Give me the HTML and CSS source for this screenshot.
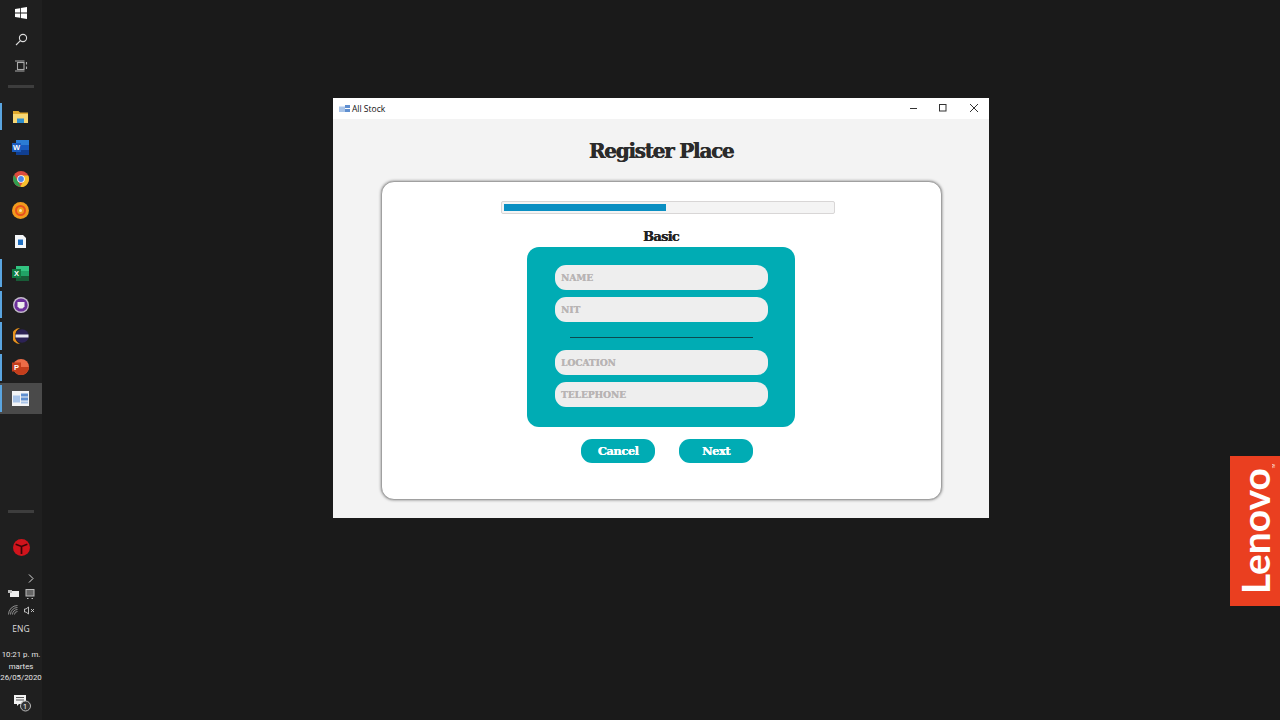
FILE: index.html
```html
<!DOCTYPE html>
<html lang="es">
<head>
    <meta charset="UTF-8">
    <meta name="viewport" content="width=device-width, initial-scale=1.0">
    <title>All Stock</title>
    <link rel="stylesheet" href="styles.css">
</head>
<body>
    <aside class="taskbar">
        <div class="taskbar-top">
            <div class="sys-btn">
                <svg width="12" height="12" viewBox="0 0 12 12"><path fill="#fff" d="M0 2l5-.8v4.400H0zM5.800 1.100L12 0v5.600H5.800zM0 6.400h5v4.400L0 10zM5.800 6.400H12V12l-6.200-1z"/></svg>
            </div>
            <div class="sys-btn">
                <svg width="13" height="13" viewBox="0 0 13 13" fill="none" stroke="#ddd" stroke-width="1.100"><circle cx="8" cy="5" r="3.600"/><path d="M5.400 7.600L1 12"/></svg>
            </div>
            <div class="sys-btn">
                <svg width="13" height="12" viewBox="0 0 13 12" fill="none" stroke="#aaa" stroke-width="1.100"><rect x="2.500" y="2.500" width="6.500" height="7"/><path d="M0 1h9.500M0 11h9.500M11.500 2v2.500M11.500 6.500V9"/></svg>
            </div>
            <div class="divider"></div>

            <div class="apps">
                <div class="app pinned">
                    <svg width="15" height="13" viewBox="0 0 15 13"><path fill="#e0a92e" d="M0 1h5.500l1.500 1.500h8V13H0z"/><path fill="#f7d774" d="M0 4h15v9H0z"/><path fill="#2f8fd0" d="M4 8.500h7V13H4z"/></svg>
                </div>
                <div class="app">
                    <svg width="17" height="15" viewBox="0 0 17 15"><path fill="#2b7cd3" d="M4 0h13v5H4z"/><path fill="#185abd" d="M4 5h13v5H4z"/><path fill="#103f91" d="M4 10h13v5H4z"/><rect y="3" width="9" height="9" fill="#1a5bbd"/><text x="4.500" y="10" class="app-letter">W</text></svg>
                </div>
                <div class="app">
                    <svg width="16" height="16" viewBox="0 0 16 16"><circle cx="8" cy="8" r="8" fill="#dd4b3e"/><path fill="#f6c02e" d="M8 4.500h7.200A8 8 0 0 1 7 15.900L10.800 9.500z"/><path fill="#2f9e4f" d="M1.200 3.800L5 10.500 7.800 15.900A8 8 0 0 1 1.200 3.800z"/><circle cx="8" cy="8" r="3.800" fill="#fff"/><circle cx="8" cy="8" r="2.900" fill="#4a86e8"/></svg>
                </div>
                <div class="app">
                    <svg width="17" height="17" viewBox="0 0 17 17"><circle cx="8.500" cy="8.500" r="8.500" fill="#f29b1d"/><circle cx="8.500" cy="8.500" r="4.500" fill="none" stroke="#e8501f" stroke-width="2"/><circle cx="8.500" cy="8.500" r="1.500" fill="#ffe2a8"/></svg>
                </div>
                <div class="app">
                    <svg width="11" height="13" viewBox="0 0 11 13"><path fill="#f4f6f8" d="M0 0h8l3 3v10H0z"/><path fill="#1f6fc0" d="M3 4.500h5v5.500H3z"/></svg>
                </div>
                <div class="app pinned">
                    <svg width="17" height="15" viewBox="0 0 17 15"><path fill="#33c481" d="M4 0h13v5H4z"/><path fill="#21a366" d="M4 5h13v5H4z"/><path fill="#185c37" d="M4 10h13v5H4z"/><rect y="3" width="9" height="9" fill="#107c41"/><text x="4.500" y="10" class="app-letter">X</text></svg>
                </div>
                <div class="app pinned">
                    <svg width="16" height="16" viewBox="0 0 16 16"><circle cx="8" cy="8" r="8" fill="#c4bccb"/><circle cx="8" cy="8" r="6.600" fill="#6b2f9a"/><path fill="#eee" d="M4.500 5h7v4.500L9.500 11.500h-3L4.500 9.500z"/></svg>
                </div>
                <div class="app pinned">
                    <svg width="16" height="16" viewBox="0 0 16 16"><path fill="#e8921e" d="M7 0a8 8 0 0 0 0 16A9 9 0 0 1 7 0z"/><circle cx="9" cy="8" r="6.800" fill="#2c2255"/><path fill="#e8e8f2" d="M2.500 6.500h13v3h-13z"/></svg>
                </div>
                <div class="app pinned">
                    <svg width="17" height="16" viewBox="0 0 17 16"><circle cx="9" cy="8" r="8" fill="#ed6c47"/><path fill="#c43e1c" d="M9 8h8a8 8 0 0 1-16 0z"/><rect y="3.500" width="9" height="9" fill="#c43e1c"/><text x="4.500" y="10.500" class="app-letter">P</text></svg>
                </div>
                <div class="app pinned active">
                    <svg width="17" height="15" viewBox="0 0 17 15"><rect width="17" height="15" fill="#f3f4f6"/><path fill="#a9c4e8" d="M1 4.500h7v7H1z"/><path fill="#5f8fd0" d="M9 2.500h7v3H9zM9 6.500h7v3H9z"/><path fill="#a9c4e8" d="M9 10.500h7v2H9z"/></svg>
                </div>
            </div>
        </div>

        <div class="tray">
            <div class="divider"></div>
            <div class="tray-logo">
                <svg width="17" height="17" viewBox="0 0 16 16"><circle cx="8" cy="8" r="8" fill="#d0141c"/><path fill="none" stroke="#3a0508" stroke-width="1.600" d="M2.500 5L8 7l5.500-2M8 7v7"/></svg>
            </div>
            <div class="tray-chevron">
                <svg width="6" height="9" viewBox="0 0 6 9" fill="none" stroke="#ddd"><path d="M1 .5l4 4-4 4"/></svg>
            </div>
            <div class="tray-row">
                <svg width="11" height="8" viewBox="0 0 11 8"><rect x="2" y="1" width="9" height="6" fill="#eee"/><rect y="0" width="4" height="3" fill="#bbb"/></svg>
                <svg width="10" height="10" viewBox="0 0 10 10" fill="none" stroke="#bbb"><rect x="1" y=".5" width="8" height="6.500" fill="#666"/><path d="M2 9.500h1.500M6.500 9.500H8"/></svg>
            </div>
            <div class="tray-row lower">
                <svg width="10" height="10" viewBox="0 0 10 10" fill="none" stroke="#aaa" stroke-width=".8"><path d="M.5 9.500a9 9 0 0 1 9-9M2.500 9.500a7 7 0 0 1 7-7M4.500 9.500a5 5 0 0 1 5-5M6.500 9.500a3 3 0 0 1 3-3"/></svg>
                <svg width="11" height="9" viewBox="0 0 11 9" fill="none" stroke="#ccc" stroke-width=".9"><path d="M.5 3h1.500L4.500 1v7L2 6H.5zM7 3l3 3M10 3L7 6"/></svg>
            </div>
            <div class="tray-lang">ENG</div>
            <div class="tray-clock">10:21 p. m.<br>martes<br>26/05/2020</div>
            <div class="tray-notif">
                <svg width="18" height="17" viewBox="0 0 18 17"><path fill="#f2f2f2" d="M0 0h12v9H5L3 11V9H0z"/><path stroke="#555" d="M2 2.500h8M2 5h8"/><circle cx="11.500" cy="11" r="5" fill="#333" stroke="#bbb"/></svg>
                <span class="notif-count">1</span>
            </div>
        </div>
    </aside>

    <main class="window">
        <header class="titlebar">
            <div class="titlebar-left">
                <svg width="11" height="7" viewBox="0 0 11 7"><path fill="#a9c4e8" d="M0 1.500h6V7H0z"/><path fill="#5f8fd0" d="M6 0h5v3H6zM6 4h5v3H6z"/></svg>
                <span>All Stock</span>
            </div>
            <div class="controls">
                <svg width="10" height="10" viewBox="0 0 10 10" stroke="#333"><path d="M1 5.500h7"/></svg>
                <svg width="10" height="10" viewBox="0 0 10 10" fill="none" stroke="#333"><rect x=".5" y="1.500" width="6.500" height="6.500"/></svg>
                <svg width="10" height="10" viewBox="0 0 10 10" stroke="#333"><path d="M1 1l8 8M9 1l-8 8"/></svg>
            </div>
        </header>
        <div class="content">
            <h1>Register Place</h1>
            <section class="card">
                <div class="progress"><div class="progress-fill"></div></div>
                <h2>Basic</h2>
                <div class="form-panel">
                    <div class="field">NAME</div>
                    <div class="field">NIT</div>
                    <div class="rule"></div>
                    <div class="field">LOCATION</div>
                    <div class="field">TELEPHONE</div>
                </div>
                <div class="actions">
                    <button class="button">Cancel</button>
                    <button class="button">Next</button>
                </div>
            </section>
        </div>
    </main>

    <div class="brand"><span>Lenovo</span><small>TM</small></div>
</body>
</html>
```

FILE: styles.css
```css
* {
    box-sizing: border-box;
}
body {
    margin: 0;
    width: 1280px;
    height: 720px;
    overflow: hidden;
    background: #1a1a1a;
    font-family: "Open Sans", "Liberation Sans", sans-serif;
}

/* taskbar */
.taskbar {
    width: 42px;
    height: 720px;
    background: #1f1f1f;
    display: flex;
    flex-direction: column;
    justify-content: space-between;
}
.sys-btn {
    height: 26.5px;
    display: flex;
    align-items: center;
    justify-content: center;
}
.divider {
    width: 26px;
    height: 3px;
    margin: 5px auto 0;
    background: #3d3d3d;
}
.apps {
    display: flex;
    flex-direction: column;
    margin-top: 13px;
}
.app {
    position: relative;
    height: 31.4px;
    display: flex;
    align-items: center;
    justify-content: center;
    padding: 0 3px 0 2px;
}
.app svg {
    display: block;
}
.app.pinned::before {
    content: "";
    position: absolute;
    left: 0;
    top: 2px;
    bottom: 2px;
    width: 2px;
    background: #5aa5e0;
}
.app.active {
    background: #4a4a4a;
}
.app-letter {
    font-family: "Liberation Sans", sans-serif;
    font-size: 7.5px;
    font-weight: bold;
    fill: #fff;
    text-anchor: middle;
}
.tray {
    display: flex;
    flex-direction: column;
    align-items: center;
}
.tray-logo {
    margin-top: 23.5px;
    height: 22px;
    display: flex;
    align-items: center;
}
.tray-chevron {
    align-self: flex-end;
    margin: 14.5px 8px 0 0;
    height: 11px;
    display: flex;
    align-items: center;
}
.tray-row {
    display: flex;
    align-items: center;
    gap: 6px;
    height: 12px;
    margin-top: 4.5px;
}
.tray-row.lower {
    margin-top: 4px;
}
.tray-lang {
    margin-top: 7px;
    font-size: 8.5px;
    line-height: 12px;
    color: #ddd;
}
.tray-clock {
    margin-top: 14px;
    font-family: "Roboto", sans-serif;
    font-size: 7.8px;
    line-height: 11.5px;
    color: #e6e6e6;
    text-align: center;
    white-space: nowrap;
}
.tray-notif {
    position: relative;
    margin-top: 11.5px;
    margin-bottom: 8px;
    margin-left: 3px;
    height: 17px;
    width: 18px;
}
.notif-count {
    position: absolute;
    left: 8px;
    top: 6px;
    width: 7px;
    font-size: 8px;
    line-height: 10px;
    text-align: center;
    color: #fff;
}

/* app window */
.window {
    position: absolute;
    left: 333px;
    top: 98px;
    width: 656px;
    height: 420px;
    background: #f3f3f3;
    display: flex;
    flex-direction: column;
}
.titlebar {
    height: 21px;
    flex: none;
    background: #fff;
    display: flex;
    align-items: center;
    justify-content: space-between;
    padding: 0 10px 1px 6px;
}
.titlebar-left {
    display: flex;
    align-items: center;
    gap: 2px;
    font-size: 8.5px;
    color: #111;
}
.controls {
    display: flex;
    gap: 20px;
}
.content {
    display: flex;
    flex-direction: column;
    align-items: center;
}
h1 {
    margin: 19px 0 0;
    height: 43px;
    font-family: "DejaVu Serif", serif;
    font-size: 20px;
    line-height: 26px;
    letter-spacing: -1.25px;
    font-weight: bold;
    color: #2b2b2b;
    text-shadow: 0.5px 0 0 #2b2b2b;
}
.card {
    width: 561px;
    height: 319px;
    margin-left: 1px;
    background: #fff;
    border-radius: 13px;
    border: 1px solid #a0a0a0;
    box-shadow: 0 0 3px rgba(0,0,0,0.5);
    display: flex;
    flex-direction: column;
    align-items: center;
    padding: 19px 1px 0 0;
}
.progress {
    width: 334px;
    height: 13px;
    margin-left: 13px;
    padding: 2px;
    background: #f4f4f4;
    border: 1px solid #d8d6d6;
    border-radius: 2px;
}
.progress-fill {
    width: 49.4%;
    height: 100%;
    background: #0a8fc2;
}
h2 {
    margin: 15px 0 0;
    height: 18px;
    font-family: "DejaVu Serif", serif;
    font-size: 13px;
    line-height: 15px;
    letter-spacing: -0.7px;
    font-weight: bold;
    color: #222;
    text-shadow: 0.3px 0 0 #222;
}
.form-panel {
    width: 268px;
    height: 180px;
    background: #00acb4;
    border-radius: 12px;
    padding: 18px 27px 0 28px;
    display: flex;
    flex-direction: column;
    gap: 7px;
}
.field {
    height: 25px;
    background: #eeeeee;
    border-radius: 11px;
    padding: 1px 0 0 6px;
    font-family: "DejaVu Serif", serif;
    font-size: 9px;
    line-height: 25px;
    font-weight: bold;
    color: #b8b4b4;
    text-shadow: 0.3px 0 0 #b8b4b4;
}
.rule {
    height: 1px;
    margin: 8px 15px 5px;
    background: #0c4a50;
}
.actions {
    display: flex;
    gap: 24px;
    margin-top: 12px;
    margin-left: 12px;
}
.button {
    width: 74px;
    height: 24px;
    padding: 0;
    border: none;
    border-radius: 11px;
    background: #00acb4;
    color: #fff;
    font-family: "DejaVu Serif", serif;
    font-size: 11.5px;
    letter-spacing: -0.5px;
    font-weight: bold;
    text-shadow: 0.3px 0 0 #fff;
}

/* wallpaper logo */
.brand {
    position: absolute;
    left: 1230px;
    top: 456px;
    width: 50px;
    height: 150px;
    background: #ea3f20;
    display: flex;
    align-items: center;
    justify-content: center;
}
.brand span {
    writing-mode: vertical-rl;
    transform: rotate(180deg);
    margin-left: -1px;
    font-family: "Lato", sans-serif;
    font-size: 39px;
    line-height: 50px;
    font-weight: 700;
    color: #fff;
}
.brand small {
    position: absolute;
    right: 4px;
    top: 8px;
    font-size: 3px;
    line-height: 4px;
    writing-mode: vertical-rl;
    transform: rotate(180deg);
    color: #fff;
}
```
